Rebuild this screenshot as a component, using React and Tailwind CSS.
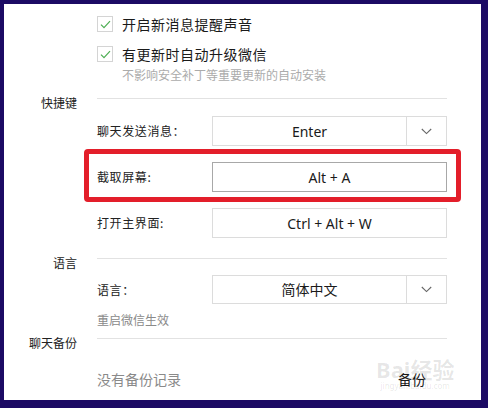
import React from 'react';

const CJK = { fontFamily: '"Noto Sans CJK SC", "Noto Sans", sans-serif' };
const LATIN = { fontFamily: '"Noto Sans", "Noto Sans CJK SC", sans-serif' };

function Check() {
  return (
    <div className="w-[16px] h-[16px] border border-[#d4d4d4] bg-white flex items-center justify-center shrink-0">
      <svg width="11" height="9" viewBox="0 0 11 9" fill="none">
        <path d="M1 4.6 L4 7.6 L10 1.2" stroke="#4cae52" strokeWidth="1.2" />
      </svg>
    </div>
  );
}

function Chevron() {
  return (
    <svg width="11" height="7" viewBox="0 0 11 7" fill="none">
      <path d="M0.8 1 L5.5 5.6 L10.2 1" stroke="#666" strokeWidth="1.1" />
    </svg>
  );
}

function Field({ label, value, select, dark, h = 'h-[30px]' }) {
  return (
    <div className="flex items-center">
      <div className="w-[115px] text-[12px] tracking-[0.6px] text-[#222]" style={CJK}>{label}</div>
      <div className={`w-[235px] ${h} flex border ${dark ? 'border-[#a8a8a8]' : 'border-[#dcdcdc]'} bg-white`}>
        <div className="flex-1 flex items-center justify-center text-[14px] text-[#1a1a1a]" style={LATIN}>{value}</div>
        {select && (
          <div className="w-[40px] border-l border-[#dcdcdc] flex items-center justify-center">
            <Chevron />
          </div>
        )}
      </div>
    </div>
  );
}

function Section({ title, children }) {
  return (
    <div className="flex">
      <div className="w-[73px] text-right text-[12px] leading-[16px] text-[#222] -mt-[3px]" style={CJK}>{title}</div>
      <div className="ml-[20px] w-[350px] border-t border-[#e2e2e2]">{children}</div>
    </div>
  );
}

export default function App() {
  return (
    <div className="relative w-[488px] h-[408px] bg-[#1c0a64] pt-[4px] pl-[4px] pr-[7px] pb-[8px]">
      <div className="w-full h-full bg-white overflow-hidden" style={CJK}>
        {/* notifications */}
        <div className="pl-[93px] pt-[12px] flex flex-col">
          <div className="flex items-center gap-[9px] h-[16px]">
            <Check />
            <span className="text-[14px] tracking-[0.5px] text-[#1a1a1a]">开启新消息提醒声音</span>
          </div>
          <div className="flex items-center gap-[9px] h-[16px] mt-[14px]">
            <Check />
            <span className="text-[14px] tracking-[0.5px] text-[#1a1a1a]">有更新时自动升级微信</span>
          </div>
          <div className="pl-[25px] mt-[5px] text-[12px] leading-[16px] text-[#ababab]">不影响安全补丁等重要更新的自动安装</div>
        </div>

        <div className="mt-[15px]">
          <Section title="快捷键">
            <div className="pt-[17px] flex flex-col gap-[16px]">
              <Field label="聊天发送消息：" value="Enter" select />
              <Field label="截取屏幕:" value="Alt + A" dark />
              <Field label="打开主界面:" value="Ctrl + Alt + W" />
            </div>
          </Section>
        </div>

        <div className="mt-[20px]">
          <Section title="语言">
            <div className="pt-[16px]">
              <Field label="语言：" value={<span style={CJK}>简体中文</span>} select h="h-[29px]" />
              <div className="mt-[8px] text-[12px] leading-[16px] text-[#8a8a8a]">重启微信生效</div>
            </div>
          </Section>
        </div>

        <div className="mt-[10px]">
          <Section title="聊天备份">
            <div className="pt-[30px] flex items-center justify-between pr-[21px]">
              <span className="text-[14px] leading-[20px] text-[#8a8a8a]">没有备份记录</span>
              <span className="text-[14px] leading-[20px] text-[#1a1a1a]">备份</span>
            </div>
          </Section>
        </div>
      </div>

      {/* highlight */}
      <div className="absolute left-[84px] top-[149px] w-[377px] h-[53px] border-[5px] border-[#e31e2a] rounded-[4px]" />

      {/* watermark */}
      <div className="absolute left-[376px] top-[356px] flex flex-col items-center pointer-events-none">
        <div className="text-[22px] font-bold leading-[24px] text-[#000]/10" style={LATIN}>Bai<span style={CJK}>经验</span></div>
        <div className="text-[8px] leading-[10px] text-[#000]/10" style={LATIN}>jingyan.baidu.com</div>
      </div>
    </div>
  );
}
